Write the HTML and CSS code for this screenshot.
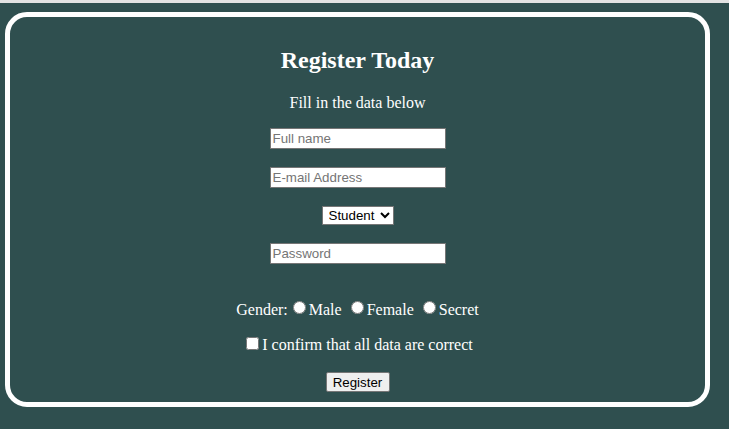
FILE: index.html
```html
<!DOCTYPE html>
<html>
<head>
<meta charset="utf-8">
<title>Register Today</title>
<link rel="stylesheet" href="styles.css">
</head>
<body>
<div class="page">
  <form class="card">
    <h2 class="title">Register Today</h2>
    <p class="lead">Fill in the data below</p>
    <input class="field field-first" type="text" placeholder="Full name">
    <input class="field" type="email" placeholder="E-mail Address">
    <select class="role">
      <option>Student</option>
      <option>Teacher</option>
    </select>
    <input class="field" type="password" placeholder="Password">
    <div class="row gender">Gender:<input class="radio" type="radio" name="g">Male <input class="radio" type="radio" name="g">Female <input class="radio" type="radio" name="g">Secret</div>
    <div class="row confirm"><input class="check" type="checkbox">I confirm that all data are correct</div>
    <button class="submit" type="button">Register</button>
  </form>
</div>
</body>
</html>
```
FILE: styles.css
```css
html {
  background: #e3e3e3;
}
body {
  margin: 0;
  font-family: "Liberation Serif", "Times New Roman", serif;
}
.page {
  margin-top: 3px;
  height: 426px;
  box-sizing: border-box;
  padding: 9px 0 0 5px;
  background: #2f4f4f;
}
.card {
  width: 705px;
  height: 395px;
  box-sizing: border-box;
  border: 5px solid #ffffff;
  border-radius: 22px;
  display: flex;
  flex-direction: column;
  align-items: center;
  color: #ffffff;
}
.title {
  margin: 29px 0 0;
  font-size: 24px;
  line-height: 28px;
  font-weight: bold;
}
.lead {
  margin: 20px 0 0;
  font-size: 16px;
  line-height: 18px;
}
.field {
  display: block;
  margin: 18px 0 0;
  width: 176px;
  height: 21px;
  box-sizing: border-box;
  border: 1px solid #767676;
  padding: 1px 2px;
  background: #ffffff;
  font-family: Arial, "Liberation Sans", sans-serif;
  font-size: 13.33px;
  color: #000;
}
.field-first {
  margin-top: 16px;
}
.field::placeholder {
  color: #757575;
}
.role {
  display: block;
  margin: 18px 0 0;
  width: 72px;
  height: 19px;
  box-sizing: border-box;
  border: 1px solid #767676;
  border-radius: 0;
  background: #ffffff;
  color: #000;
  font-family: Arial, "Liberation Sans", sans-serif;
  font-size: 13.33px;
  padding: 0 0 0 2px;
}
.row {
  font-size: 16px;
  line-height: 18px;
  white-space: nowrap;
}
.gender {
  margin-top: 34px;
}
.confirm {
  margin-top: 17px;
}
.radio {
  margin: 3px 3px 0 5px;
  width: 13px;
  height: 13px;
  vertical-align: 1px;
}
.check {
  margin: 0 3px 0 4px;
  width: 13px;
  height: 13px;
  vertical-align: 0;
}
.submit {
  margin-top: 18px;
  width: 64px;
  height: 20px;
  box-sizing: border-box;
  padding: 0 6px;
  border: 1px solid #767676;
  border-radius: 2px;
  background: #efefef;
  color: #000;
  font-family: Arial, "Liberation Sans", sans-serif;
  font-size: 13.33px;
}
```
